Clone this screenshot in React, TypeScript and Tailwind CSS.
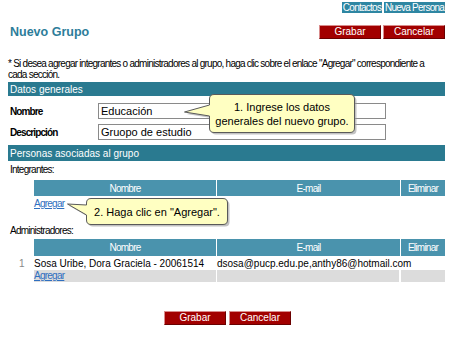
import React from 'react';

const narrow = "tracking-[-0.75px]";

function RedButton({ label }: { label: string }) {
  return (
    <button className="w-[62px] h-[14px] bg-[#a20000] border border-t-[#d98c8c] border-l-[#d98c8c] border-b-[#6a0000] border-r-[#6a0000] text-white text-[10px] leading-[12px]">
      {label}
    </button>
  );
}

function TopLink({ label, w }: { label: string; w: string }) {
  return (
    <a className={`${w} h-[11px] bg-[#2e86a2] text-white text-[10px] leading-[11px] text-center whitespace-nowrap ${narrow}`}>{label}</a>
  );
}

function SectionBar({ title, h }: { title: string; h: string }) {
  return (
    <div className={`ml-[8px] mr-[5px] ${h} bg-[#2a7a90] text-white text-[10px] flex items-center pl-[2px]`}>{title}</div>
  );
}

function Header() {
  return (
    <div className={`flex gap-[1px] text-white text-[10px] ${narrow}`}>
      <div className="w-[182px] bg-[#4a93ad] flex items-center justify-center">Nombre</div>
      <div className="w-[183px] bg-[#4a93ad] flex items-center justify-center">E-mail</div>
      <div className="w-[44px] bg-[#4a93ad] flex items-center justify-center">Eliminar</div>
    </div>
  );
}

function Bubble({ className, w, h, tipX, tipY, baseTop, baseBottom, children }: {
  className: string; w: number; h: number; tipX: number; tipY: number; baseTop: number; baseBottom: number; children: React.ReactNode;
}) {
  const r = 5;
  const d = `M ${r} 0.5 H ${w - r} Q ${w - 0.5} 0.5 ${w - 0.5} ${r} V ${h - r} Q ${w - 0.5} ${h - 0.5} ${w - r} ${h - 0.5} H ${r} Q 0.5 ${h - 0.5} 0.5 ${h - r} V ${baseBottom} L ${0.5 - tipX} ${tipY} L 0.5 ${baseTop} V ${r} Q 0.5 0.5 ${r} 0.5 Z`;
  return (
    <div className={`absolute ${className}`} style={{ width: w, height: h }}>
      <svg className="absolute overflow-visible left-0 top-0" width={w} height={h}>
        <path d={d} transform="translate(2 2)" fill="#9a9a9a" opacity="0.6" />
        <path d={d} fill="#ffffc2" stroke="#5a5a5a" strokeWidth="1" />
      </svg>
      <div className="relative h-full flex flex-col items-center justify-center text-[11px] leading-[14px] text-black text-center">{children}</div>
    </div>
  );
}

export default function App() {
  return (
    <div className="relative w-[450px] h-[356px] bg-white overflow-hidden font-['Liberation_Sans',Arial,sans-serif] text-black">
      <div className="flex justify-end gap-[2px] pt-[2px] pr-[5px]">
        <TopLink label="Contactos" w="w-[40px]" />
        <TopLink label="Nueva Persona" w="w-[61px]" />
      </div>

      <div className="flex items-center justify-between mt-[12px] pl-[10px] pr-[5px] h-[14px]">
        <h1 className="text-[12.5px] font-bold text-[#2d7d9a]">Nuevo Grupo</h1>
        <div className="flex gap-[2px]">
          <RedButton label="Grabar" />
          <RedButton label="Cancelar" />
        </div>
      </div>

      <p className={`mt-[20px] ml-[8px] mr-[20px] text-[10px] leading-[10.5px] ${narrow}`}>
        * Si desea agregar integrantes o administradores al grupo, haga clic sobre el enlace "Agregar" correspondiente a cada sección.
      </p>

      <div className="mt-[2px]">
        <SectionBar title="Datos generales" h="h-[14px]" />
      </div>

      <div className="mt-[7px] flex flex-col gap-[5px] pl-[10px]">
        <div className="flex items-center">
          <span className="w-[88px] text-[10px] font-bold tracking-[-0.9px]">Nombre</span>
          <div className="w-[288px] h-[16px] border border-[#8a8a8a] text-[11px] leading-[14px] pl-[2px]">Educación</div>
        </div>
        <div className="flex items-center">
          <span className="w-[88px] text-[10px] font-bold tracking-[-0.9px]">Descripción</span>
          <div className="w-[288px] h-[16px] border border-[#8a8a8a] text-[11px] leading-[14px] pl-[2px]">Gruopo de estudio</div>
        </div>
      </div>

      <div className="mt-[5px]">
        <SectionBar title="Personas asociadas al grupo" h="h-[16px]" />
      </div>

      <div className={`mt-[3px] ml-[10px] text-[10px] leading-[12px] ${narrow}`}>Integrantes:</div>
      <div className="mt-[4px] ml-[34px] h-[16px] flex">
        <Header />
      </div>
      <div className={`ml-[34px] mt-[2px] text-[10px] leading-[11px] ${narrow}`}>
        <a className="text-[#2f6fc0] underline">Agregar</a>
      </div>

      <div className={`mt-[16px] ml-[10px] text-[10px] leading-[12px] ${narrow}`}>Administradores:</div>
      <div className="mt-[2px] ml-[34px] h-[17px] flex">
        <Header />
      </div>
      <div className="flex items-center h-[14px] text-[10px]">
        <span className="w-[34px] pl-[19px] text-[#888]">1</span>
        <span className="w-[183px]">Sosa Uribe, Dora Graciela - 20061514</span>
        <span>dsosa@pucp.edu.pe,anthy86@hotmail.com</span>
      </div>
      <div className="ml-[34px] flex gap-[1px] h-[12px]">
        <div className={`w-[182px] bg-[#dcdcdc] text-[10px] leading-[11px] ${narrow}`}>
          <a className="text-[#2f6fc0] underline">Agregar</a>
        </div>
        <div className="w-[182px] bg-[#dcdcdc] mr-[1px]" />
        <div className="w-[44px] bg-[#dcdcdc]" />
      </div>

      <div className="flex gap-[3px] mt-[29px] ml-[164px]">
        <RedButton label="Grabar" />
        <RedButton label="Cancelar" />
      </div>

      <Bubble className="left-[209px] top-[94px]" w={146} h={39} tipX={25} tipY={18} baseTop={11} baseBottom={22}>
        <span>1. Ingrese los datos</span>
        <span>generales del nuevo grupo.</span>
      </Bubble>
      <Bubble className="left-[86px] top-[198px]" w={142} h={27} tipX={19} tipY={6} baseTop={7} baseBottom={17}>
        <span>2. Haga clic en "Agregar".</span>
      </Bubble>
    </div>
  );
}
